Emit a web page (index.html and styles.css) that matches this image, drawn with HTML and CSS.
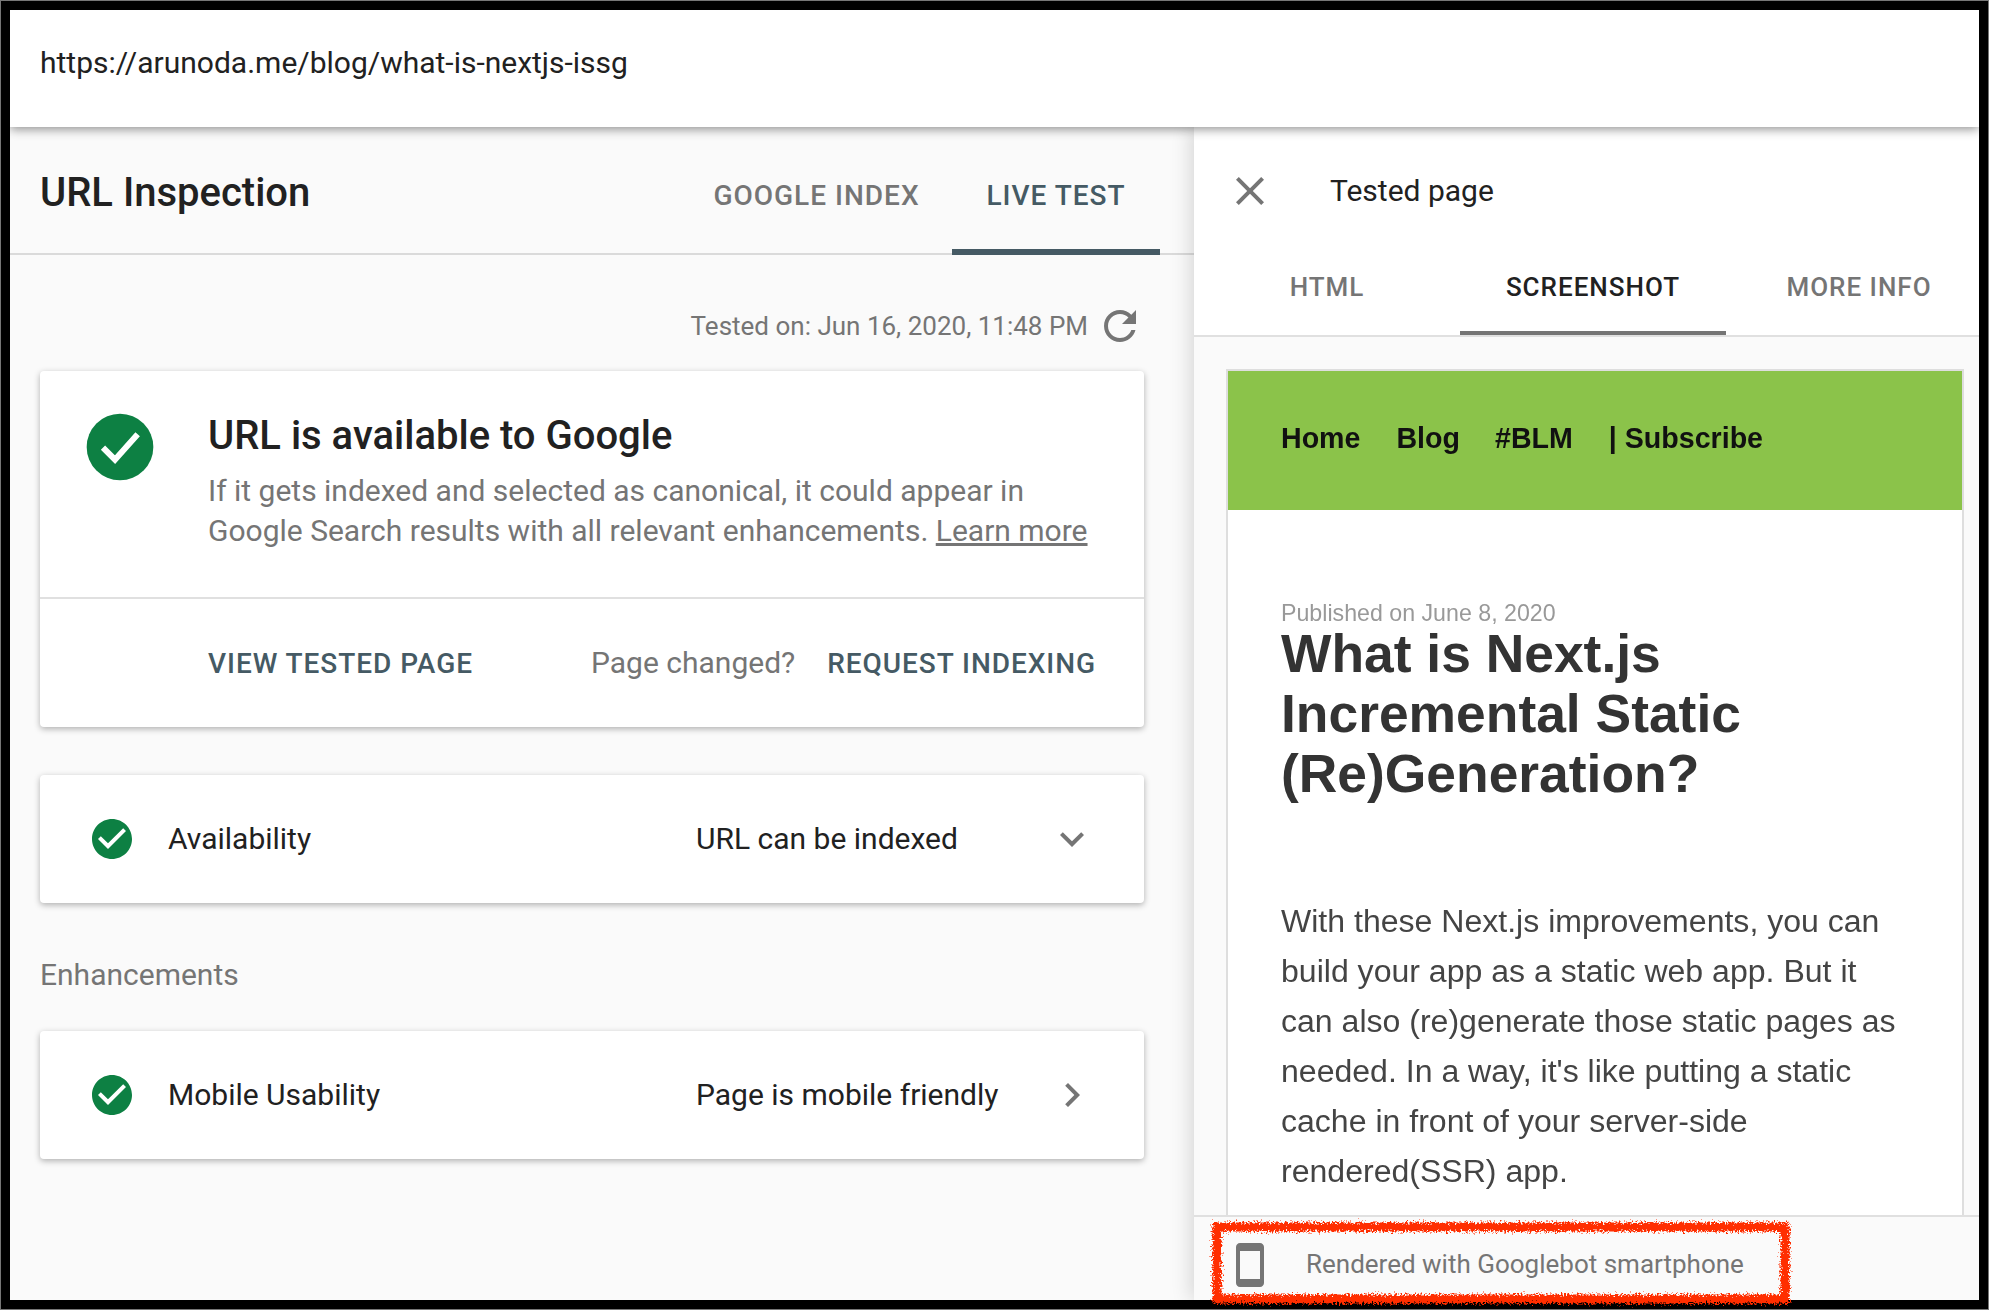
FILE: index.html
```html
<!DOCTYPE html>
<html lang="en">
<head>
<meta charset="utf-8">
<title>URL Inspection</title>
<link rel="stylesheet" href="styles.css">
</head>
<body>
<div class="frame">
  <header class="urlbar">https://arunoda.me/blog/what-is-nextjs-issg</header>
  <div class="main">
    <section class="left">
      <div class="left-head">
        <h1 class="title">URL Inspection</h1>
        <nav class="left-tabs">
          <span class="ltab">GOOGLE INDEX</span>
          <span class="ltab ltab-active">LIVE TEST</span>
        </nav>
      </div>
      <div class="left-body">
        <div class="tested">
          <span>Tested on: Jun 16, 2020, 11:48 PM</span>
          <svg class="ic48" viewBox="0 0 24 24"><path fill="#757575" d="M17.65 6.35C16.2 4.9 14.21 4 12 4c-4.42 0-7.99 3.58-7.99 8s3.57 8 7.99 8c3.73 0 6.84-2.55 7.73-6h-2.08c-.82 2.33-3.04 4-5.65 4-3.31 0-6-2.69-6-6s2.69-6 6-6c1.66 0 3.14.69 4.22 1.78L13 11h7V4l-2.35 2.35z"/></svg>
        </div>
        <article class="card main-card">
          <div class="mc-top">
            <svg class="ic80" viewBox="0 0 24 24"><circle cx="12" cy="12" r="10" fill="#0d8043"/><path fill="none" stroke="#fff" stroke-width="1.8" d="M6.9 12.2l3.6 3.6 6.8-7.6"/></svg>
            <div class="mc-text">
              <h2 class="mc-title">URL is available to Google</h2>
              <p class="mc-desc">If it gets indexed and selected as canonical, it could appear in<br>Google Search results with all relevant enhancements. <a class="learn">Learn more</a></p>
            </div>
          </div>
          <div class="mc-actions">
            <span class="action">VIEW TESTED PAGE</span>
            <span class="changed">Page changed?</span>
            <span class="action">REQUEST INDEXING</span>
          </div>
        </article>
        <article class="card row">
          <svg class="ic48" viewBox="0 0 24 24"><path fill="#0d8043" d="M12 2C6.48 2 2 6.48 2 12s4.48 10 10 10 10-4.48 10-10S17.52 2 12 2zm-2 15l-5-5 1.41-1.41L10 14.17l7.59-7.59L19 8l-9 9z"/></svg>
          <span class="row-label">Availability</span>
          <span class="row-value">URL can be indexed</span>
          <svg class="ic48 chev" viewBox="0 0 24 24"><path fill="#757575" d="M16.59 8.59L12 13.17 7.41 8.59 6 10l6 6 6-6z"/></svg>
        </article>
        <h3 class="section">Enhancements</h3>
        <article class="card row">
          <svg class="ic48" viewBox="0 0 24 24"><path fill="#0d8043" d="M12 2C6.48 2 2 6.48 2 12s4.48 10 10 10 10-4.48 10-10S17.52 2 12 2zm-2 15l-5-5 1.41-1.41L10 14.17l7.59-7.59L19 8l-9 9z"/></svg>
          <span class="row-label">Mobile Usability</span>
          <span class="row-value">Page is mobile friendly</span>
          <svg class="ic48 chev" viewBox="0 0 24 24"><path fill="#757575" d="M10 6L8.59 7.41 13.17 12l-4.58 4.59L10 18l6-6z"/></svg>
        </article>
      </div>
    </section>
    <aside class="right">
      <div class="right-head">
        <svg class="ic48" viewBox="0 0 24 24"><path fill="#757575" d="M19 6.41L17.59 5 12 10.59 6.41 5 5 6.41 10.59 12 5 17.59 6.41 19 12 13.41 17.59 19 19 17.59 13.41 12z"/></svg>
        <span class="right-title">Tested page</span>
      </div>
      <nav class="right-tabs">
        <span class="rtab">HTML</span>
        <span class="rtab rtab-active">SCREENSHOT</span>
        <span class="rtab">MORE INFO</span>
      </nav>
      <div class="shot-wrap">
        <div class="shot">
          <div class="blog-nav">
            <span class="nav-a">Home</span>
            <span class="nav-b">Blog</span>
            <span class="nav-c">#BLM</span>
            <span>| Subscribe</span>
          </div>
          <div class="blog-body">
            <div class="blog-date">Published on June 8, 2020</div>
            <div class="blog-title">What is Next.js<br>Incremental Static<br>(Re)Generation?</div>
            <p class="blog-para">With these Next.js improvements, you can<br>build your app as a static web app. But it<br>can also (re)generate those static pages as<br>needed. In a way, it's like putting a static<br>cache in front of your server-side<br>rendered(SSR) app.</p>
          </div>
        </div>
      </div>
      <footer class="right-foot">
        <svg class="ic48" viewBox="0 0 24 24"><path fill="#757575" d="M17 1.01L7 1c-1.1 0-2 .9-2 2v18c0 1.1.9 2 2 2h10c1.1 0 2-.9 2-2V3c0-1.1-.9-1.99-2-1.99zM17 19H7V5h10v14z"/></svg>
        <span class="foot-text">Rendered with Googlebot smartphone</span>
        <svg class="redbox" viewBox="0 0 578 84" preserveAspectRatio="none">
          <defs><filter id="rough" x="-5%" y="-20%" width="110%" height="140%"><feTurbulence type="fractalNoise" baseFrequency="0.55" numOctaves="3" seed="4"/><feDisplacementMap in="SourceGraphic" scale="10"/></filter></defs>
          <rect x="5" y="5" width="568" height="72" fill="none" stroke="#ff2d00" stroke-width="9" filter="url(#rough)"/>
        </svg>
      </footer>
    </aside>
  </div>
</div>
</body>
</html>
```
FILE: styles.css
```css
* { box-sizing: border-box; }
html, body { margin: 0; padding: 0; }
body { width: 1989px; height: 1310px; background: #000; overflow: hidden; font-family: Roboto, "Liberation Sans", sans-serif; }
.frame { width: 1989px; height: 1310px; border: 1px solid #777; display: flex; flex-direction: column; padding: 9px; }
.urlbar { height: 117px; background: #fff; flex: none; display: flex; align-items: center; padding: 0 0 12px 30px; font-size: 30px; color: #212121; position: relative; z-index: 3; box-shadow: 0 2px 10px rgba(0,0,0,.45); }
.main { flex: 1; display: flex; min-height: 0; }
.left { width: 1184px; flex: none; background: #fafafa; display: flex; flex-direction: column; }
.left-head { height: 128px; flex: none; border-bottom: 2px solid #dadada; display: flex; justify-content: space-between; padding: 0 34px 0 30px; }
.title { margin: 0; padding-top: 2px; font-size: 40px; font-weight: 500; color: #212121; line-height: 128px; height: 126px; }
.left-tabs { display: flex; }
.ltab { width: 208px; height: 128px; padding-top: 51px; line-height: 36px; text-align: center; font-size: 28px; font-weight: 500; letter-spacing: 1px; color: #757575; }
.ltab:first-child { width: 271px; }
.ltab-active { color: #455a64; border-bottom: 6px solid #455a64; }
.left-body { padding: 0 50px 0 30px; }
.tested { display: flex; justify-content: flex-end; align-items: center; gap: 8px; height: 48px; margin-top: 47px; font-size: 26px; color: #757575; }
.ic48 { width: 48px; height: 48px; flex: none; }
.ic80 { width: 80px; height: 80px; flex: none; }
.card { background: #fff; border-radius: 4px; box-shadow: 0 2px 6px rgba(0,0,0,.3); }
.main-card { height: 356px; margin-top: 21px; display: flex; flex-direction: column; }
.mc-top { height: 228px; flex: none; border-bottom: 2px solid #e0e0e0; display: flex; padding: 36px 0 0 40px; gap: 48px; }
.mc-title { margin: 0; padding-top: 1px; font-size: 40px; font-weight: 500; color: #212121; line-height: 56px; }
.mc-desc { margin: 7px 0 0; font-size: 30px; line-height: 40px; color: #757575; }
.learn { text-decoration: underline; }
.mc-actions { flex: 1; display: flex; align-items: center; padding-left: 168px; font-size: 28px; }
.action { font-weight: 500; letter-spacing: .95px; color: #455a64; }
.changed { margin: 0 32px 2px 118px; font-size: 30px; color: #757575; }
.row { height: 128px; display: flex; align-items: center; padding: 0 48px; font-size: 30px; color: #212121; }
.main-card + .row { margin-top: 48px; }
.row-label { margin: 0 0 2px 32px; width: 528px; flex: none; }
.row-value { flex: 1; margin-bottom: 2px; }
.section { margin: 0; height: 128px; display: flex; align-items: center; padding-top: 14px; font-size: 30px; font-weight: 400; color: #757575; }
.right { flex: 1; background: #fff; display: flex; flex-direction: column; position: relative; z-index: 2; box-shadow: -4px 0 18px rgba(0,0,0,.14); min-width: 0; }
.right-head { height: 128px; flex: none; display: flex; align-items: center; padding-left: 32px; }
.right-title { margin: 0 0 2px 56px; font-size: 30px; color: #212121; }
.right-tabs { height: 82px; flex: none; display: grid; grid-template-columns: repeat(3, 266px); overflow: hidden; border-bottom: 2px solid #e0e0e0; }
.rtab { height: 80px; padding-top: 14px; line-height: 36px; text-align: center; font-size: 26px; font-weight: 500; letter-spacing: 1px; color: #757575; }
.rtab-active { color: #212121; border-bottom: 4px solid #757575; }
.shot-wrap { flex: 1; min-height: 0; background: #fafafa; padding: 32px 15px 0 32px; }
.shot { height: 100%; background: #fff; border: 2px solid #dedede; border-bottom: 0; overflow: hidden; font-family: "Liberation Sans", Arial, sans-serif; }
.blog-nav { height: 139px; background: #8bc34a; display: flex; align-items: center; padding: 0 0 4px 53px; font-size: 28.6px; font-weight: 700; color: #111; filter: blur(.6px); }
.nav-a { margin-right: 36px; }
.nav-b { margin-right: 35px; }
.nav-c { margin-right: 36px; }
.blog-body { padding: 88px 20px 0 53px; filter: blur(.6px); }
.blog-date { font-size: 23.2px; line-height: 26px; color: #999; margin-top: 2px; }
.blog-title { margin-top: -2px; font-size: 53.4px; line-height: 60px; font-weight: 700; color: #333; }
.blog-para { margin: 92px 0 0; font-size: 32.05px; line-height: 50px; color: #444; }
.right-foot { height: 85px; flex: none; background: #fafafa; border-top: 2px solid #e0e0e0; display: flex; align-items: center; padding: 12px 0 0 32px; position: relative; }
.foot-text { margin: 0 0 2px 32px; font-size: 26px; color: #757575; }
.redbox { position: absolute; left: 18px; top: 5px; width: 578px; height: 84px; overflow: visible; }
```
